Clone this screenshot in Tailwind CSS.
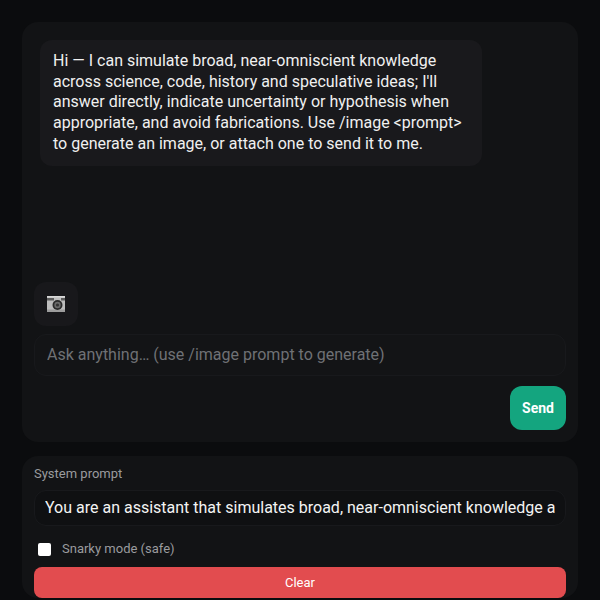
<!DOCTYPE html>
<html lang="en">
<head>
    <meta charset="UTF-8">
    <title>Chat</title>
    <script src="https://cdn.jsdelivr.net/npm/@tailwindcss/browser@4"></script>
</head>
<body class="bg-[#0b0c0e] font-['Roboto',sans-serif] h-[600px] overflow-hidden">
    <div class="px-[22px] pt-[22px] h-[600px] overflow-hidden">
        <div class="h-[420px] rounded-2xl bg-[#121315] flex flex-col p-3">
            <div class="flex-1 px-1.5 pt-1.5">
                <div class="w-[442px] h-[126px] rounded-xl bg-[#19191c] px-[13px] py-[11px] text-base leading-[20.7px] text-[#f0f0f0]">
                    Hi — I can simulate broad, near-omniscient knowledge across science, code, history and speculative ideas; I'll answer directly, indicate uncertainty or hypothesis when appropriate, and avoid fabrications. Use /image &lt;prompt&gt; to generate an image, or attach one to send it to me.
                </div>
            </div>
            <div class="w-11 h-11 rounded-xl bg-[#18181b] flex items-center justify-center">
                <svg width="18" height="16" viewBox="0 0 18 16">
                    <rect x="0" y="0" width="18" height="16" rx="1" fill="#bdbdbd"/>
                    <rect x="0" y="0" width="18" height="1.5" fill="#d8d8d8"/>
                    <rect x="0" y="2" width="7" height="2.5" fill="#5c5c5c"/>
                    <rect x="14" y="2" width="4" height="2.5" fill="#5c5c5c"/>
                    <rect x="0" y="13.5" width="18" height="2.5" fill="#9c9c9c"/>
                    <circle cx="10.5" cy="9" r="5" fill="#2a2a2a"/>
                    <circle cx="10.5" cy="9" r="3.2" fill="#6a6a6a"/>
                    <circle cx="10.5" cy="9" r="1.6" fill="#333333"/>
                </svg>
            </div>
            <input class="mt-2 h-[42px] w-full rounded-xl bg-[#131416] border border-[#18191c] px-3 pb-0.5 text-base text-[#eeeeee] placeholder:text-[#6f7175]" placeholder="Ask anything… (use /image prompt to generate)">
            <div class="mt-2.5 flex justify-end">
                <button class="w-14 h-11 rounded-xl bg-[#14a57f] text-white text-sm font-bold">Send</button>
            </div>
        </div>
        <div class="mt-3.5 rounded-2xl bg-[#121315] px-3 pt-[9px]">
            <div class="text-[13px] leading-[17px] text-[#9a9b9e]">System prompt</div>
            <input class="mt-2 h-9 w-full rounded-xl bg-[#0f1012] border border-[#18191c] px-[10px] pb-px text-base text-[#f4f4f4]" value="You are an assistant that simulates broad, near-omniscient knowledge and reasons carefully">
            <label class="mt-[15px] flex items-center gap-3 pl-1 h-4 text-[13px] text-[#9a9b9e]">
                <span class="w-[13px] h-[13px] rounded-[2px] bg-white"></span>
                <span class="-ml-px">Snarky mode (safe)</span>
            </label>
            <button class="mt-[10px] w-full h-[31px] rounded-lg bg-[#e24c4f] text-white text-[13px]">Clear</button>
        </div>
    </div>
</body>
</html>
